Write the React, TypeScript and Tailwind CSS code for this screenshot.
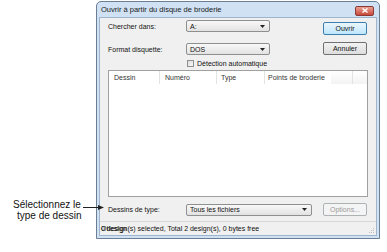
import React from 'react';

const Combo: React.FC<{ value: string; className?: string }> = ({ value, className = '' }) => (
  <div
    className={`flex items-center justify-between h-[12px] border border-[#8e8f8f] rounded-[2px] bg-gradient-to-b from-[#f8f8f8] to-[#e2e2e2] pl-[3px] pr-[4px] ${className}`}
  >
    <span className="text-[7px] leading-none text-[#111]">{value}</span>
    <svg width="5" height="3" viewBox="0 0 5 3">
      <path d="M0 0 L5 0 L2.5 3 Z" fill="#222" />
    </svg>
  </div>
);

const Button: React.FC<{ label: string; primary?: boolean; disabled?: boolean }> = ({ label, primary, disabled }) => (
  <div
    className={`flex items-center justify-center w-[44px] h-[13px] rounded-[2px] border text-[7px] leading-none ${
      primary ? 'border-[#3c7fb1] bg-gradient-to-b from-[#eaf6fd] to-[#bee6fd]' : 'border-[#707070] bg-gradient-to-b from-[#f2f2f2] to-[#dddddd]'
    } ${disabled ? 'border-[#adb2b5] from-[#f4f4f4] to-[#f4f4f4] text-[#9a9a9a]' : 'text-[#111]'}`}
  >
    {label}
  </div>
);

export default function App() {
  return (
    <div className="w-[387px] h-[252px] bg-white flex font-['Liberation_Sans',Arial,sans-serif] overflow-hidden">
      {/* Annotation */}
      <div className="w-[96px] shrink-0 flex flex-col pt-[199px]">
        <div className="relative text-[10px] leading-[11px] text-[#111] w-[96px]">
          <div className="pl-[13px]">Sélectionnez le</div>
          <div className="pl-[17px]">type de dessin</div>
          <div className="absolute left-[83px] top-[8px] w-[17px] h-px bg-[#222]" />
          <svg className="absolute left-[98px] top-[6px]" width="6" height="5" viewBox="0 0 6 5">
            <path d="M0 0 L6 2.5 L0 5 Z" fill="#222" />
          </svg>
        </div>
      </div>

      {/* Dialog */}
      <div className="w-[284px] h-[238px] mt-px flex flex-col border border-[#6b7f94] rounded-t-[5px] bg-[#cfe1f3] px-[2px] pb-[2px]">
        <div className="h-[15px] flex items-center justify-between pl-[2px] pr-[3px]">
          <span className="text-[7.5px] text-[#1a1a1a] mt-px">Ouvrir à partir du disque de broderie</span>
          <div className="w-[19px] h-[10px] mt-[2px] rounded-[2px] border border-[#8a3a32] bg-gradient-to-b from-[#e8a093] to-[#c7473a] flex items-center justify-center">
            <svg width="6" height="5" viewBox="0 0 6 5">
              <path d="M0.5 0.5 L5.5 4.5 M5.5 0.5 L0.5 4.5" stroke="#fff" strokeWidth="1.4" />
            </svg>
          </div>
        </div>

        <div className="flex-1 flex flex-col bg-[#f0f0f0] border border-[#9db5cd] text-[7px] leading-none text-[#111]">
          <div className="flex pl-[8px] pr-[9px] pt-[1px]">
            <div className="flex flex-col">
              <div className="flex items-center h-[12px] mt-[1px]">
                <span className="w-[78px]">Chercher dans:</span>
                <Combo value="A:" className="w-[84px]" />
              </div>
              <div className="flex items-center h-[12px] mt-[11px]">
                <span className="w-[78px]">Format disquette:</span>
                <Combo value="DOS" className="w-[84px]" />
              </div>
              <div className="flex items-center mt-[5px] ml-[79px] gap-[3px]">
                <div className="w-[7px] h-[7px] border border-[#8e8f8f] bg-gradient-to-br from-[#dcdcdc] to-[#f8f8f8]" />
                <span>Détection automatique</span>
              </div>
            </div>
            <div className="ml-auto flex flex-col gap-[7px] mt-[3px]">
              <Button label="Ouvrir" primary />
              <Button label="Annuler" />
            </div>
          </div>

          {/* List */}
          <div className="mx-[8px] mt-[3px] h-[127px] border border-[#a0a0a0] bg-white flex flex-col">
            <div className="flex h-[13px] items-center text-[7px] text-[#333]">
              <div className="w-[51px] h-full flex items-center pl-[5px] border-r border-[#e3e3e3]">Dessin</div>
              <div className="w-[57px] h-full flex items-center pl-[5px] border-r border-[#e3e3e3]">Numéro</div>
              <div className="w-[48px] h-full flex items-center pl-[4px] border-r border-[#e3e3e3]">Type</div>
              <div className="w-[66px] h-full flex items-center pl-[3px]">Points de broderie</div>
              <div className="w-[22px] h-full border-r border-[#e3e3e3] bg-gradient-to-b from-[#fff] to-[#f3f3f3]" />
              <div className="flex-1 h-full bg-gradient-to-b from-[#fff] to-[#f3f3f3]" />
            </div>
          </div>

          {/* Bottom row */}
          <div className="flex items-center pl-[8px] pr-[9px] mt-[6px]">
            <span className="w-[78px]">Dessins de type:</span>
            <Combo value="Tous les fichiers" className="w-[126px]" />
            <div className="ml-auto">
              <Button label="Options..." disabled />
            </div>
          </div>

          {/* Status bar */}
          <div className="mt-auto h-[14px] border-t border-[#d7d7d7] flex items-center pl-[1px] relative">
            <span className="relative">
              <span className="absolute left-0 top-0 text-[#222]">Otlesign</span>
              <span>0 design(s) selected, Total 2 design(s), 0 bytes free</span>
            </span>
            <svg className="absolute right-[1px] bottom-[1px]" width="8" height="8" viewBox="0 0 8 8">
              <g fill="#bdbdbd">
                <rect x="6" y="2" width="1" height="1" />
                <rect x="4" y="4" width="1" height="1" />
                <rect x="6" y="4" width="1" height="1" />
                <rect x="2" y="6" width="1" height="1" />
                <rect x="4" y="6" width="1" height="1" />
                <rect x="6" y="6" width="1" height="1" />
              </g>
            </svg>
          </div>
        </div>
      </div>
    </div>
  );
}
